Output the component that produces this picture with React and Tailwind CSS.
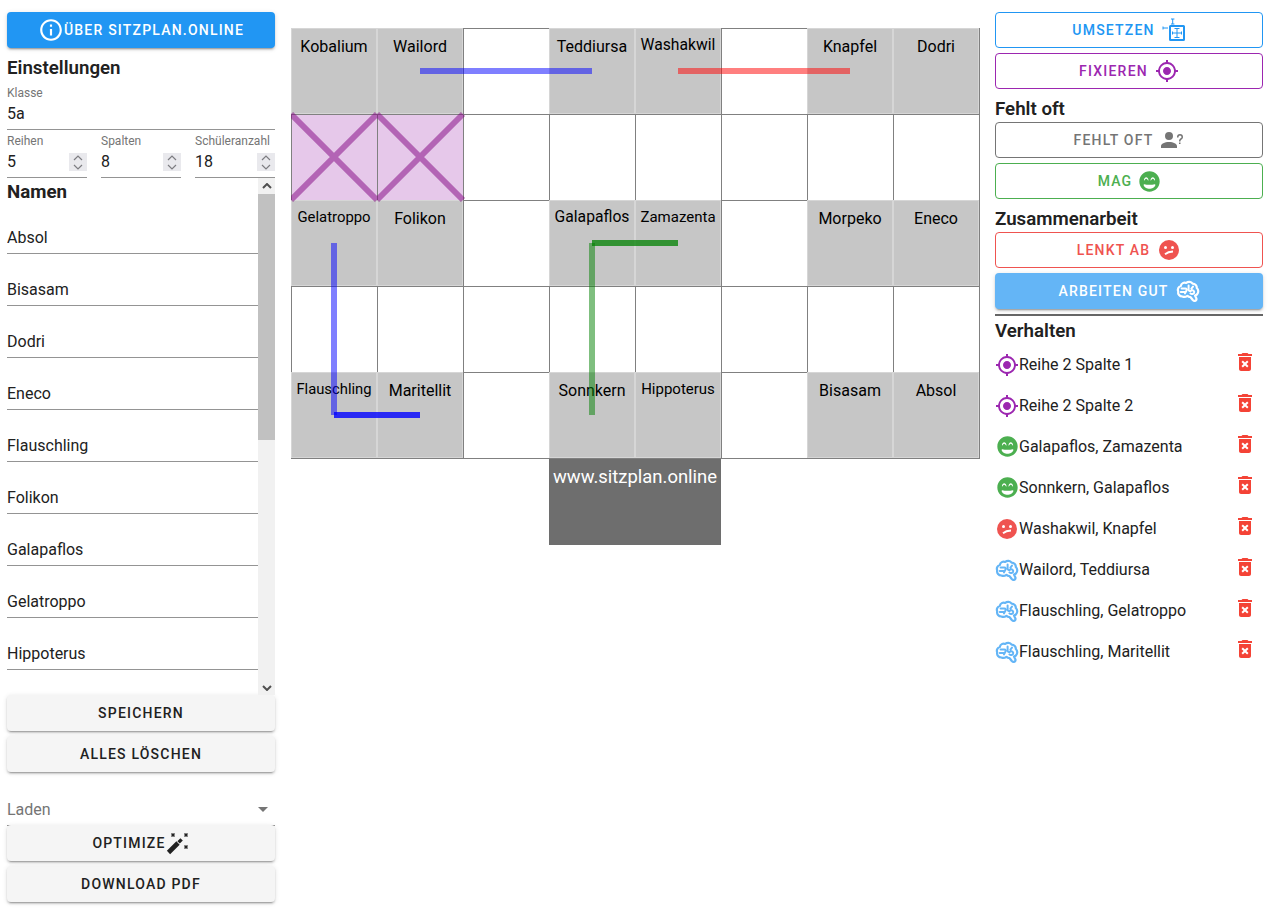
import { MdInfoOutline, MdGpsFixed, MdDeleteForever, MdArrowDropDown } from 'react-icons/md'
import { FaGrinBeam } from 'react-icons/fa'

const btnShadow = 'shadow-[0_3px_1px_-2px_rgba(0,0,0,0.2),0_2px_2px_0_rgba(0,0,0,0.14),0_1px_5px_0_rgba(0,0,0,0.12)]'
const btnBase = 'flex h-9 w-full items-center justify-center rounded text-sm font-medium uppercase tracking-[1.2px]'
const headingBase = 'flex items-center text-[18.72px] font-semibold'

const names = ['Absol', 'Bisasam', 'Dodri', 'Eneco', 'Flauschling', 'Folikon', 'Galapaflos', 'Gelatroppo', 'Hippoterus']

const seats = [
  ['Kobalium', 'Wailord', null, 'Teddiursa', { n: 'Washakwil', c: 'text-[15.7px]' }, null, 'Knapfel', 'Dodri'],
  ['x', 'x', null, null, null, null, null, null],
  [{ n: 'Gelatroppo', c: 'text-[14.9px]' }, 'Folikon', null, { n: 'Galapaflos', c: 'text-[15.7px]' }, { n: 'Zamazenta', c: 'text-[15px]' }, null, 'Morpeko', 'Eneco'],
  [null, null, null, null, null, null, null, null],
  [{ n: 'Flauschling', c: 'text-[14.8px]' }, 'Maritellit', null, 'Sonnkern', { n: 'Hippoterus', c: 'text-[15px]' }, null, 'Bisasam', 'Absol'],
]

function QuestionPerson({ size = 24 }) {
  return (
    <svg width={size} height={size} viewBox="0 0 24 24" fill="currentColor">
      <path d="M13,8A4,4 0 0,1 9,12A4,4 0 0,1 5,8A4,4 0 0,1 9,4A4,4 0 0,1 13,8M17,18V20H1V18C1,15.79 4.58,14 9,14C13.42,14 17,15.79 17,18M20.5,14.5V16H19V14.5H20.5M18.5,9.5H17V9A3,3 0 0,1 20,6A3,3 0 0,1 23,9C23,9.97 22.5,10.88 21.71,11.41L21.41,11.6C20.84,12 20.5,12.61 20.5,13.3V13.5H19V13.3C19,12.11 19.6,11 20.59,10.35L20.88,10.16C21.27,9.9 21.5,9.47 21.5,9A1.5,1.5 0 0,0 20,7.5A1.5,1.5 0 0,0 18.5,9V9.5Z" />
    </svg>
  )
}

function Confused({ size = 24 }) {
  return (
    <svg width={size} height={size} viewBox="0 0 24 24">
      <circle cx="12" cy="12" r="10" fill="currentColor" />
      <circle cx="8.5" cy="9.5" r="1.5" fill="#fff" />
      <circle cx="15.5" cy="9.5" r="1.5" fill="#fff" />
      <path d="M8 16.2c2-1.7 4.5-2.6 8-2.7" fill="none" stroke="#fff" strokeWidth="1.8" />
    </svg>
  )
}

function Brain({ size = 24 }) {
  return (
    <svg width={size} height={size} viewBox="0 0 24 24" fill="none" stroke="currentColor" strokeWidth="2.2" strokeLinejoin="round" strokeLinecap="round">
      <path d="M6.5 17.5C3.6 17.6 1.6 15 2.2 12.4 1.2 10 2.6 7.6 4.8 7 5.2 4.4 8 3 10.2 4 12 2.4 15.2 2.6 16.6 4.6 19.2 4.6 21 6.8 20.8 9 22.6 10.6 22.8 13.6 21 15.4 20.4 16 19.8 16.4 19 16.6L20.4 19.4C20.8 20.4 20.2 21.6 19 21.8 18 22 17.4 21.6 16.8 21L14.6 18.2C13.4 18.2 12.2 17.8 11.4 16.8 9.8 18 7.8 18.2 6.5 17.5Z" />
      <path d="M5.6 9.6H9.4C10.6 9.6 11 10.8 10.4 11.8L9 14.4M4.8 13H9.4M12.6 6.6V10.6C12.6 12 14 12.4 15 11.8M15 11.6C17 10.6 18.8 12.2 18 14 17.4 15.2 15.4 15.4 14.4 14.4M17 7.6 15.4 9.6" strokeWidth="2" />
    </svg>
  )
}

function MoveBox({ size = 24 }) {
  return (
    <svg width={size} height={size} viewBox="0 0 24 24" fill="none" stroke="currentColor">
      <rect x="8" y="8" width="14" height="14" rx="0.5" strokeWidth="2" />
      <path d="M15 10.5v9M12.5 10.5h5M12.5 19.5h5M10.5 15h9M10.5 13.5v3M19.5 13.5v3" strokeWidth="1" />
      <path d="M10.7 1v5M9 1h3.4M9 6h3.4M1 8.5v3M1 10h5" strokeWidth="1" />
    </svg>
  )
}

function Wand({ size = 24 }) {
  return (
    <svg width={size} height={size} viewBox="0 0 24 24" fill="none" stroke="currentColor">
      <path d="M2.5 21.5 12 12" strokeWidth="4.6" />
      <path d="M12.6 11.4 15.6 8.4" strokeWidth="3.4" />
      <path d="M5.5 2.5l3 3M8.5 2.5l-3 3M18.5 2.5l3 3M21.5 2.5l-3 3M18.5 14.5l3 3M21.5 14.5l-3 3" strokeWidth="1.5" />
    </svg>
  )
}

function Spinner() {
  return (
    <div className="flex h-[18px] w-[18px] shrink-0 flex-col items-center justify-center gap-[3px] bg-[#e9e9ed]">
      <svg width="10" height="6" viewBox="0 0 10 6" fill="none" stroke="#7d7d82" strokeWidth="1.2"><path d="M1 5l4-4 4 4" /></svg>
      <svg width="10" height="6" viewBox="0 0 10 6" fill="none" stroke="#7d7d82" strokeWidth="1.2"><path d="M1 1l4 4 4-4" /></svg>
    </div>
  )
}

function NumberField({ label, value }) {
  return (
    <div className="h-[43px] w-20 border-b border-[#949494]">
      <div className="h-3 whitespace-nowrap text-xs leading-3 text-[#757575]">{label}</div>
      <div className="flex h-[30px] items-center justify-between text-base">
        <span>{value}</span>
        <Spinner />
      </div>
    </div>
  )
}

function Seat({ seat }) {
  if (seat === 'x') return <div className="h-[87px] w-[87px] border border-[#808080] bg-[#e6c8ea]" />
  if (!seat) return <div className="h-[87px] w-[87px] border border-[#808080] bg-white" />
  if (typeof seat === 'string') {
    return <div className="h-[86px] w-[86px] border border-[#d6d6d6] bg-[#c6c6c6] pt-1.5 text-center text-base leading-6 text-black">{seat}</div>
  }
  return <div className={`h-[86px] w-[86px] overflow-visible whitespace-nowrap border border-[#d6d6d6] bg-[#c6c6c6] pt-[5px] text-center leading-[22px] text-black ${seat.c}`}>{seat.n}</div>
}

function SeatLines() {
  return (
    <svg className="pointer-events-none absolute left-0 top-0" width="690" height="431" viewBox="0 0 690 431" fill="none" strokeWidth="6">
      <path d="M129 43H301" stroke="#0000ff" strokeOpacity="0.5" />
      <path d="M387 43H559" stroke="#ff0000" strokeOpacity="0.5" />
      <path d="M43 215V387" stroke="#0000ff" strokeOpacity="0.5" />
      <path d="M43 387H129" stroke="#0000ff" strokeOpacity="0.8" />
      <path d="M301 215H387" stroke="#008000" strokeOpacity="0.75" />
      <path d="M301 215V387" stroke="#008000" strokeOpacity="0.5" />
      <path d="M0 86L86 172M86 86L0 172M86 86L172 172M172 86L86 172" stroke="#800080" strokeOpacity="0.5" />
    </svg>
  )
}

function Behaviour({ icon, text }) {
  return (
    <div className="flex h-[41px] items-center text-base">
      <div className="flex h-6 w-6 shrink-0 items-center justify-center">{icon}</div>
      <span className="flex-1">{text}</span>
      <MdDeleteForever size={24} className="mr-[6px] -mt-[6px] text-[#f44336]" />
    </div>
  )
}

const target = <MdGpsFixed size={24} className="text-[#9c27b0]" />
const happy = <FaGrinBeam size={21} className="text-[#4caf50]" />
const sad = <span className="text-[#ef5350]"><Confused /></span>
const brain = <span className="text-[#64b5f6]"><Brain /></span>

export default function App() {
  return (
    <div className="flex h-[918px] overflow-hidden bg-white font-['Roboto',sans-serif] text-[#212121]">
      <aside className="ml-[7px] mt-3 w-[268px] shrink-0">
        <button className={`${btnBase} bg-[#2196f3] text-white ${btnShadow}`}>
          <MdInfoOutline size={26} />
          Über sitzplan.online
        </button>
        <h3 className={`${headingBase} h-[38px] pt-[3px]`}>Einstellungen</h3>
        <div className="h-11 border-b border-[#949494]">
          <div className="h-3 pt-px text-xs leading-3 text-[#757575]">Klasse</div>
          <div className="flex h-[31px] items-center text-base">5a</div>
        </div>
        <div className="mt-[5px] flex justify-between">
          <NumberField label="Reihen" value="5" />
          <NumberField label="Spalten" value="8" />
          <NumberField label="Schüleranzahl" value="18" />
        </div>
        <div className="flex h-[517px] overflow-hidden">
          <div className="flex-1 overflow-hidden">
            <h3 className="flex h-6 items-center pt-[3px] text-[18.72px] font-bold leading-6">Namen</h3>
            {names.map((name) => (
              <div key={name} className="flex h-[52px] items-end border-b border-[#949494] pb-[3px] text-base">{name}</div>
            ))}
          </div>
          <div className="flex w-[17px] shrink-0 flex-col bg-[#f1f1f1]">
            <div className="flex h-4 items-center justify-center">
              <svg width="10" height="6" viewBox="0 0 10 6" fill="none" stroke="#505050" strokeWidth="2"><path d="M1 5l4-4 4 4" /></svg>
            </div>
            <div className="h-[246px] bg-[#c1c1c1]" />
            <div className="mt-auto flex h-4 items-center justify-center pt-px">
              <svg width="10" height="6" viewBox="0 0 10 6" fill="none" stroke="#505050" strokeWidth="2"><path d="M1 1l4 4 4-4" /></svg>
            </div>
          </div>
        </div>
        <button className={`${btnBase} bg-[#f5f5f5] ${btnShadow}`}>Speichern</button>
        <button className={`${btnBase} mt-[5px] bg-[#f5f5f5] ${btnShadow}`}>Alles löschen</button>
        <div className="-mb-px flex h-[54px] items-end justify-between border-b border-[#949494] pb-[3px] text-base text-[#757575]">
          <span>Laden</span>
          <MdArrowDropDown size={24} className="mb-px text-[#757575]" />
        </div>
        <button className={`${btnBase} relative bg-[#f5f5f5] ${btnShadow}`}>Optimize<Wand /></button>
        <button className={`${btnBase} mt-[5px] bg-[#f5f5f5] ${btnShadow}`}>Download PDF</button>
      </aside>

      <main className="ml-4 mt-7 w-[689px] shrink-0">
        <div className="relative h-[431px] w-[690px]">
          <div className="grid grid-cols-[repeat(8,86px)] auto-rows-[86px]">
            {seats.flat().map((seat, i) => <Seat key={i} seat={seat} />)}
          </div>
          <div className="pointer-events-none absolute left-0 top-0 h-[431px] w-[689px] border-b border-r border-[#808080]" />
          <SeatLines />
        </div>
        <div className="ml-[258px] h-[86px] w-[172px] whitespace-nowrap bg-[#6e6e6e] pt-1.5 text-center text-[18.45px] leading-6 text-white">www.sitzplan.online</div>
      </main>

      <aside className="ml-[15px] mt-3 w-[268px] shrink-0">
        <button className={`${btnBase} gap-[7px] border border-[#2196f3] text-[#2196f3]`}>Umsetzen<MoveBox /></button>
        <button className={`${btnBase} mt-[5px] gap-[7px] border border-[#9c27b0] text-[#9c27b0]`}>Fixieren<MdGpsFixed size={24} /></button>
        <h3 className={`${headingBase} h-[33px] pt-[7px]`}>Fehlt oft</h3>
        <button className={`${btnBase} gap-[7px] border border-[#757575] text-[#757575]`}>Fehlt oft<QuestionPerson /></button>
        <button className={`${btnBase} mt-[5px] gap-[7px] border border-[#4caf50] text-[#4caf50]`}>Mag<FaGrinBeam size={21} /></button>
        <h3 className={`${headingBase} h-[33px] pt-[7px]`}>Zusammenarbeit</h3>
        <button className={`${btnBase} gap-[7px] border border-[#ef5350] text-[#ef5350]`}>Lenkt ab<Confused /></button>
        <button className={`${btnBase} mt-[5px] gap-[7px] bg-[#64b5f6] text-white ${btnShadow}`}>Arbeiten gut<Brain /></button>
        <div className="mt-[5px] h-0.5 bg-[#666666]" />
        <h3 className={`${headingBase} h-7 pt-[3px]`}>Verhalten</h3>
        <Behaviour icon={target} text="Reihe 2 Spalte 1" />
        <Behaviour icon={target} text="Reihe 2 Spalte 2" />
        <Behaviour icon={happy} text="Galapaflos, Zamazenta" />
        <Behaviour icon={happy} text="Sonnkern, Galapaflos" />
        <Behaviour icon={sad} text="Washakwil, Knapfel" />
        <Behaviour icon={brain} text="Wailord, Teddiursa" />
        <Behaviour icon={brain} text="Flauschling, Gelatroppo" />
        <Behaviour icon={brain} text="Flauschling, Maritellit" />
      </aside>
    </div>
  )
}
